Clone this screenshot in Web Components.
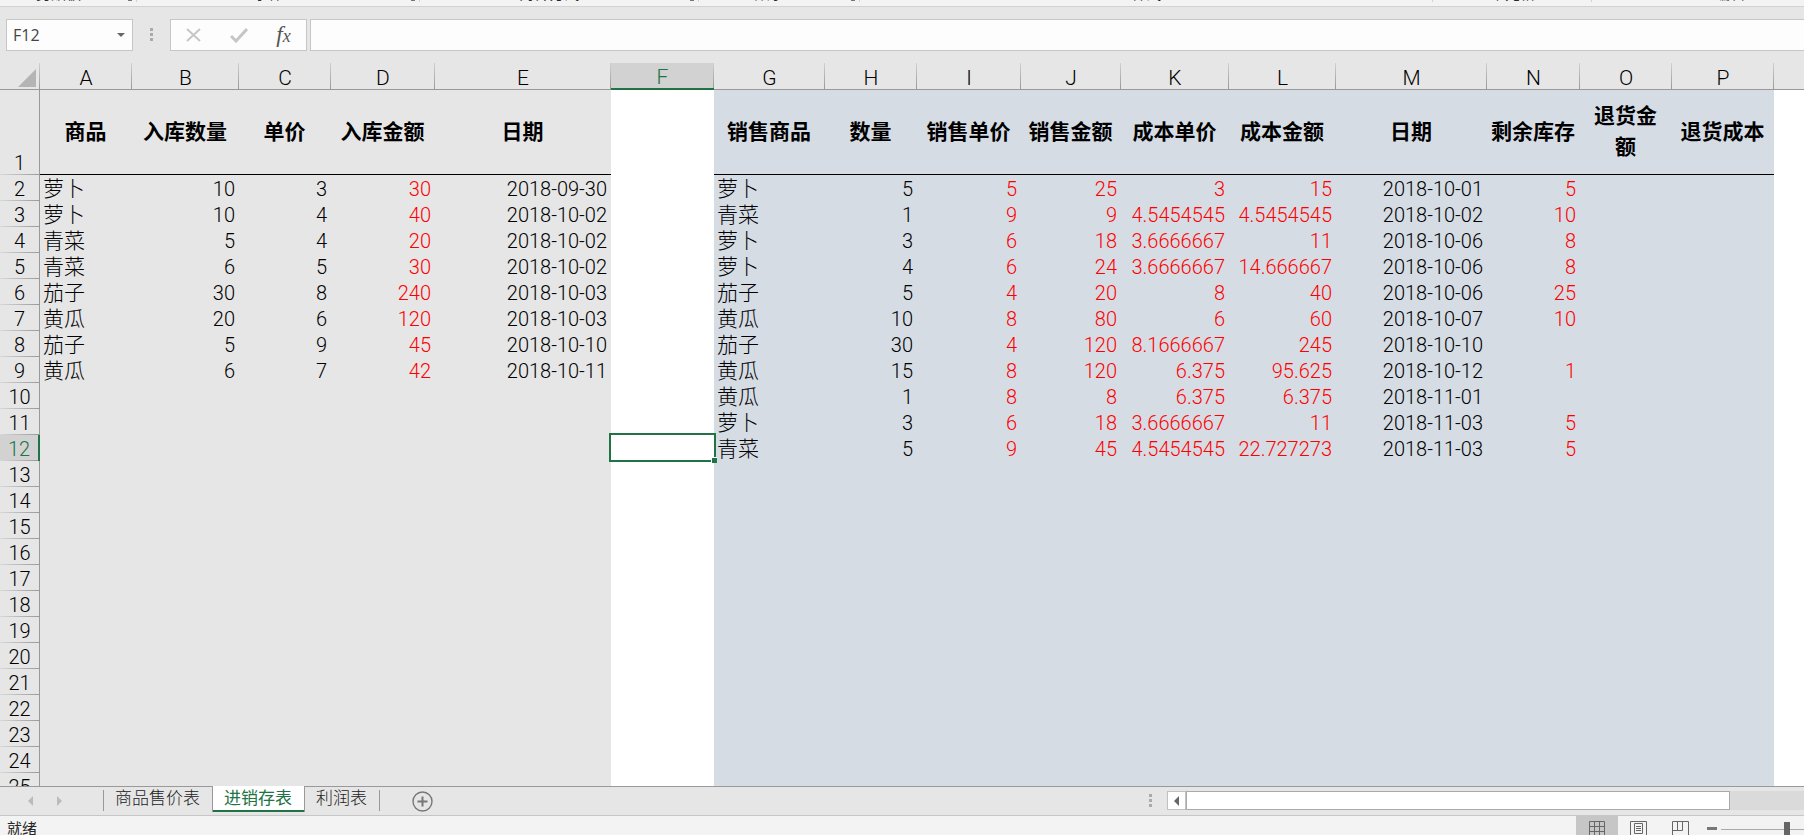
<!DOCTYPE html>
<html lang="zh-CN">
<head>
<meta charset="utf-8">
<title>进销存表</title>
<style>
html, body { margin: 0; height: 100%; }
body { font-family: "Noto Sans CJK SC", "Noto Sans", sans-serif; color: #000; overflow: hidden; }
</style>
</head>
<body>
<workbook-app></workbook-app>
<script>
const define = (name, html, setup) => customElements.define(name, class extends HTMLElement {
  connectedCallback() {
    if (this.shadowRoot) return;
    this.attachShadow({ mode: "open" }).innerHTML = html;
    if (setup) setup(this, this.shadowRoot);
  }
});

define("ribbon-group", `
<style>
:host { box-sizing: border-box; display: flex; justify-content: center; align-items: flex-end; position: relative; height: 28px; flex: none; color: #262626; font-size: 15px; line-height: 26px; }
:host::after { content: ""; position: absolute; right: 0; top: 0; bottom: 4px; width: 1px; background: #d2d2d2; }
:host([last])::after { display: none; }
i { display: none; position: absolute; right: 5px; bottom: 5px; width: 4px; height: 1px; background: #777; }
:host([launcher]) { padding-right: 20px; }
:host([launcher]) i { display: block; }
</style><slot></slot><i></i>`);

define("ribbon-edge", `
<style>
:host { box-sizing: border-box; display: flex; align-items: flex-end; height: 7px; overflow: hidden; background: #f3f3f3; border-bottom: 1px solid #d2d2d2; flex: none; }
.a { width: 137px; } .b { width: 283px; } .c { width: 279px; } .d { width: 161px; } .e { width: 573px; } .f { width: 159px; } .g { width: 276px; }
</style>
<ribbon-group class="a" launcher>剪贴板</ribbon-group><ribbon-group class="b" launcher>字体</ribbon-group><ribbon-group class="c" launcher>对齐方式</ribbon-group><ribbon-group class="d" launcher>数字</ribbon-group><ribbon-group class="e">样式</ribbon-group><ribbon-group class="f">单元格</ribbon-group><ribbon-group class="g" last>编辑</ribbon-group>`);

define("formula-bar", `
<style>
:host { display: flex; align-items: flex-start; padding: 12px 0 0 6px; flex: none; box-sizing: border-box; height: 56px; }
.box { box-sizing: border-box; height: 32px; background: #fdfdfd; border: 1px solid #c6c6c6; display: flex; align-items: center; }
.name { width: 127px; }
input { border: 0; outline: 0; background: none; font: 16px "Open Sans", "Noto Sans CJK SC", sans-serif; color: #444; min-width: 0; flex: 1; padding: 0 6px; height: 28px; }
button { border: 0; background: none; padding: 0; display: block; height: 30px; }
svg { display: block; margin: auto; }
.name button { width: 22px; }
.grip { width: 37px; height: 32px; display: flex; align-items: center; }
.tools { width: 137px; margin-right: 3px; }
.tools button { flex: 1; }
.fx { font: italic 23px/28px "Liberation Serif", serif; color: #555; }
.fx small { font-size: 18px; }
.formula { flex: 1; border-right: 0; }
</style>
<div class="box name"><input aria-label="名称框" value="F12"><button aria-label="展开名称"><svg width="8" height="4"><path d="M0 0h8L4 4z" fill="#666"/></svg></button></div>
<div class="grip"><svg width="3" height="14"><path d="M0 0h3v3H0zM0 5h3v3H0zM0 10h3v3H0z" fill="#aaa"/></svg></div>
<div class="box tools">
<button aria-label="取消"><svg width="16" height="14"><path d="M1 1l13 12M14 1L1 13" stroke="#c6c6c6" stroke-width="2" fill="none"/></svg></button>
<button aria-label="输入"><svg width="18" height="15"><path d="M1 8l5 5L17 1" stroke="#c6c6c6" stroke-width="3" fill="none"/></svg></button>
<button class="fx" aria-label="插入函数">f<small>x</small></button>
</div>
<div class="box formula"><input aria-label="编辑栏"></div>`);

const COLS = [92,107,92,104,176,103,111,92,104,100,108,107,151,93,92,102];
const HEADS = ["商品","入库数量","单价","入库金额","日期","","销售商品","数量","销售单价","销售金额","成本单价","成本金额","日期","剩余库存","退货金额","退货成本"];
const LEFT = `萝卜 10 3 30 2018-09-30
萝卜 10 4 40 2018-10-02
青菜 5 4 20 2018-10-02
青菜 6 5 30 2018-10-02
茄子 30 8 240 2018-10-03
黄瓜 20 6 120 2018-10-03
茄子 5 9 45 2018-10-10
黄瓜 6 7 42 2018-10-11`.split("\n").map(r => r.split(" "));
const RIGHT = `萝卜 5 5 25 3 15 2018-10-01 5
青菜 1 9 9 4.5454545 4.5454545 2018-10-02 10
萝卜 3 6 18 3.6666667 11 2018-10-06 8
萝卜 4 6 24 3.6666667 14.666667 2018-10-06 8
茄子 5 4 20 8 40 2018-10-06 25
黄瓜 10 8 80 6 60 2018-10-07 10
茄子 30 4 120 8.1666667 245 2018-10-10
黄瓜 15 8 120 6.375 95.625 2018-10-12 1
黄瓜 1 8 8 6.375 6.375 2018-11-01
萝卜 3 6 18 3.6666667 11 2018-11-03 5
青菜 5 9 45 4.5454545 22.727273 2018-11-03 5`.split("\n").map(r => r.split(" "));
const RED = new Set([3, 8, 9, 10, 11, 13]);

define("sheet-grid", `
<style>
:host { display: block; flex: 1; min-height: 0; overflow: hidden; background: #fff; border-bottom: 1px solid #999; }
table { width: 100%; table-layout: fixed; border-collapse: separate; border-spacing: 0; font-family: Roboto, "Noto Sans CJK SC", sans-serif; font-size: 20px; line-height: 24px; }
th, td { box-sizing: border-box; padding: 2px 4px 0 3px; height: 26px; white-space: nowrap; font-weight: 300; }
thead th { height: 27px; padding: 4px 0 0; line-height: 21px; font-size: 21px; background: linear-gradient(#d0d0d0, #999) right / 1px 100% no-repeat #e6e6e6; border-bottom: 1px solid #999; }
thead th.sel { background-color: #d2d2d2; color: #217346; border-bottom: 2px solid #217346; }
thead th:last-child { background: #e6e6e6; }
tbody th { padding: 1px 0 0; background: linear-gradient(90deg, #d8d8d8, #999) bottom / 100% 1px no-repeat #e6e6e6; border-right: 1px solid #999; vertical-align: bottom; }
tbody th.sel { background-color: #d2d2d2; color: #217346; border-right: 2px solid #217346; }
td { text-align: right; vertical-align: middle; }
td.in { background: #e6e6e6; } td.out { background: #d6dce4; }
td.txt { text-align: left; font-size: 21px; } td.red { color: #f00; }
.heads th { height: 85px; }
.heads td { padding: 0 5px 0 4px; font-weight: 700; font-size: 21px; line-height: 31px; text-align: center; white-space: normal; }
.heads .in, .heads .out { border-bottom: 1px solid #000; }
td.cur { position: relative; }
td.cur::before { content: ""; position: absolute; inset: -2px -2px -1px -2px; border: 2px solid #217346; z-index: 1; }
td.cur::after { content: ""; position: absolute; right: -3px; bottom: -2px; width: 5px; height: 5px; background: #217346; border: 1px solid #fff; border-width: 1px 0 0 1px; z-index: 2; }
svg { display: block; margin-left: auto; margin-right: 4px; }
</style><table></table>`, (host, root) => {
  const letter = i => String.fromCharCode(65 + i);
  const zone = i => i < 5 ? "in" : i > 5 ? "out" : "";
  let h = `<colgroup><col style="width:40px">${COLS.map(w => `<col style="width:${w}px">`).join("")}<col></colgroup><thead><tr><th aria-label="全选"><svg width="18" height="18"><path d="M18 0v18H0z" fill="#b4b4b4"/></svg></th>`;
  h += COLS.map((_, i) => `<th scope="col"${i === 5 ? ' class="sel"' : ""}>${letter(i)}</th>`).join("") + "<th></th></tr></thead><tbody>";
  h += `<tr class="heads"><th scope="row">1</th>${HEADS.map((t, i) => `<td class="${zone(i)}">${t}</td>`).join("")}<td></td></tr>`;
  for (let r = 2; r <= 25; r++) {
    const l = LEFT[r - 2] || [], q = RIGHT[r - 2] || [];
    h += `<tr><th scope="row"${r === 12 ? ' class="sel"' : ""}>${r}</th>`;
    for (let i = 0; i < 16; i++) {
      const v = i < 5 ? l[i] : i > 5 ? q[i - 6] : "";
      const c = [zone(i), RED.has(i) ? "red" : "", i === 0 || i === 6 ? "txt" : "", i === 5 && r === 12 ? "cur" : ""].filter(Boolean).join(" ");
      h += `<td class="${c}">${v || ""}</td>`;
    }
    h += "<td></td></tr>";
  }
  root.querySelector("table").innerHTML = h + "</tbody>";
});

define("sheet-tabs", `
<style>
:host { display: flex; height: 29px; flex: none; box-sizing: border-box; border-bottom: 1px solid #c6c6c6; background: #e6e6e6; align-items: flex-start; }
button { font: 17px/20px "Noto Sans CJK SC", sans-serif; font-weight: 300; border: 0; background: none; padding: 0; color: #222; }
svg { display: block; }
.nav { display: flex; gap: 24px; padding: 9px 0 0 28px; width: 75px; }
.tabs { display: flex; align-items: flex-start; gap: 1px; }
.tab { box-sizing: border-box; height: 25px; padding: 0 12px 5px 11px; }
.tab.on { position: relative; height: 26px; margin-top: -1px; padding-top: 1px; padding-bottom: 3px; font-weight: 400; background: #fff; color: #217346; border-bottom: 2px solid #217346; box-shadow: -1px 0 #999, 1px 0 #999; }
.line { width: 1px; height: 21px; margin-top: 3px; background: #999; }
.add { margin: 4px 0 0 32px; }
.space { flex: 1; }
.grip { margin: 7px 15px 0 0; }
.scroll { display: flex; width: 637px; height: 19px; margin-top: 4px; background: #dadada; }
.scroll button { box-sizing: border-box; width: 19px; height: 19px; border: 1px solid #c0c0c0; background: #fff; }
.scroll button svg { margin: auto; }
.thumb { box-sizing: border-box; width: 544px; height: 19px; border: 1px solid #aaa; background: #fff; }
</style>
<div class="nav"><button aria-label="上一张"><svg width="5" height="10"><path d="M5 0v10L0 5z" fill="#bbb"/></svg></button><button aria-label="下一张"><svg width="5" height="10"><path d="M0 0v10l5-5z" fill="#bbb"/></svg></button></div>
<span class="line"></span>
<div class="tabs"><button class="tab">商品售价表</button><button class="tab on">进销存表</button><button class="tab">利润表</button></div>
<span class="line"></span>
<button class="add" aria-label="新工作表"><svg width="21" height="21"><circle cx="10.5" cy="10.5" r="9.5" fill="none" stroke="#777" stroke-width="1.4"/><path d="M5.500 10.500h10M10.500 5.500v10" stroke="#777" stroke-width="2"/></svg></button>
<span class="space"></span>
<svg class="grip" width="3" height="14"><path d="M0 0h3v3H0zM0 5h3v3H0zM0 10h3v3H0z" fill="#aaa"/></svg>
<div class="scroll"><button aria-label="向左滚动"><svg width="5" height="10"><path d="M5 0v10L0 5z" fill="#666"/></svg></button><div class="thumb"></div></div>`);

define("status-bar", `
<style>
:host { display: flex; height: 19px; flex: none; overflow: hidden; background: #f3f3f3; color: #262626; font-size: 15px; line-height: 24px; }
.msg { flex: 1; padding-left: 7px; }
button { box-sizing: border-box; border: 0; padding: 5px 0 0; background: none; width: 42px; height: 26px; display: flex; align-items: flex-start; }
button.on { background: #c6c6c6; }
svg { display: block; margin: 0 auto; }
.zoom { width: 102px; }
</style>
<span class="msg">就绪</span>
<button class="on" aria-label="普通"><svg width="16" height="17"><path d="M.5.500h15v16H.5zM5.500.500v16M10.500.500v16M.5 5.500h15M.5 10.500h15" fill="none" stroke="#666"/></svg></button>
<button aria-label="页面布局"><svg width="18" height="19"><path d="M.5.500h16v18H.5zM4.500 2.500h8v10h-8zM6 5.500h5M6 7.500h5M6 9.500h5" fill="none" stroke="#666"/></svg></button>
<button aria-label="分页预览"><svg width="18" height="19"><path d="M.5.500h16v18H.5zM5.500.500v9M10.500.500v9H.5" fill="none" stroke="#666"/></svg></button>
<svg class="zoom" width="102" height="19" role="img" aria-label="缩放"><path d="M5 11h10v3H5z" fill="#777"/><path d="M19 13h83v1H19z" fill="#aaa"/><path d="M82 6h6v13h-6z" fill="#666"/></svg>`);

define("workbook-app", `
<style>:host { display: flex; flex-direction: column; height: 100vh; background: #e6e6e6; }</style>
<ribbon-edge></ribbon-edge><formula-bar></formula-bar><sheet-grid></sheet-grid><sheet-tabs></sheet-tabs><status-bar></status-bar>`);
</script>
</body>
</html>
